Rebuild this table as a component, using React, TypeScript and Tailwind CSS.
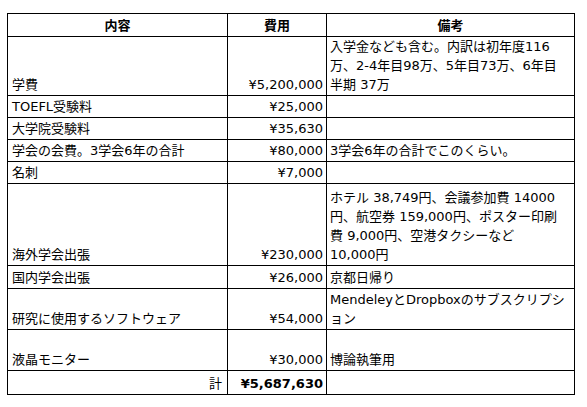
import React from "react";

type Row = {
  item: React.ReactNode;
  cost: string;
  note?: React.ReactNode;
  h: string;
};

const rows: Row[] = [
  {
    item: "学費",
    cost: "¥5,200,000",
    note: (
      <>
        入学金なども含む。内訳は初年度116
        <br />
        万、2-4年目98万、5年目73万、6年目
        <br />
        半期 37万
      </>
    ),
    h: "h-[59px]",
  },
  { item: "TOEFL受験料", cost: "¥25,000", h: "h-[22px]" },
  { item: "大学院受験料", cost: "¥35,630", h: "h-[22px]" },
  { item: "学会の会費。3学会6年の合計", cost: "¥80,000", note: "3学会6年の合計でこのくらい。", h: "h-[22px]" },
  { item: "名刺", cost: "¥7,000", h: "h-[22px]" },
  {
    item: "海外学会出張",
    cost: "¥230,000",
    note: (
      <>
        ホテル 38,749円、会議参加費 14000
        <br />
        円、航空券 159,000円、ポスター印刷
        <br />
        費 9,000円、空港タクシーなど
        <br />
        10,000円
      </>
    ),
    h: "h-[82px]",
  },
  { item: "国内学会出張", cost: "¥26,000", note: "京都日帰り", h: "h-[23px]" },
  {
    item: "研究に使用するソフトウェア",
    cost: "¥54,000",
    note: (
      <>
        MendeleyとDropboxのサブスクリプシ
        <br />
        ョン
      </>
    ),
    h: "h-[41px]",
  },
  { item: "液晶モニター", cost: "¥30,000", note: "博論執筆用", h: "h-[41px]" },
];

const App: React.FC = () => {
  return (
    <div className="w-[587px] h-[407px] bg-white pt-[13px] pl-[7px] font-['DejaVu_Sans','Noto_Sans_CJK_JP',sans-serif] text-[13px] leading-[19px] text-black">
      <table className="border-collapse table-fixed w-[567px]">
        <colgroup>
          <col className="w-[220px]" />
          <col className="w-[99px]" />
          <col className="w-[248px]" />
        </colgroup>
        <thead>
          <tr className="h-[23px]">
            <th className="border border-black text-center font-bold align-middle">内容</th>
            <th className="border border-black text-center font-bold align-middle">費用</th>
            <th className="border border-black text-center font-bold align-middle">備考</th>
          </tr>
        </thead>
        <tbody>
          {rows.map((r, i) => (
            <tr key={i} className={r.h}>
              <td className="border border-black align-bottom pl-[4px] pb-[1px] whitespace-nowrap">{r.item}</td>
              <td className="border border-black align-bottom text-right pr-[3px] pb-[1px] whitespace-nowrap">{r.cost}</td>
              <td className="border border-black align-bottom pl-[3px] pb-[1px] whitespace-nowrap">{r.note}</td>
            </tr>
          ))}
          <tr className="h-[24px]">
            <td className="border border-black align-bottom text-right pr-[5px] pb-[1px]">計</td>
            <td className="border border-black align-bottom text-right pr-[3px] pb-[1px] font-bold">¥5,687,630</td>
            <td className="border border-black"></td>
          </tr>
        </tbody>
      </table>
    </div>
  );
};

export default App;
